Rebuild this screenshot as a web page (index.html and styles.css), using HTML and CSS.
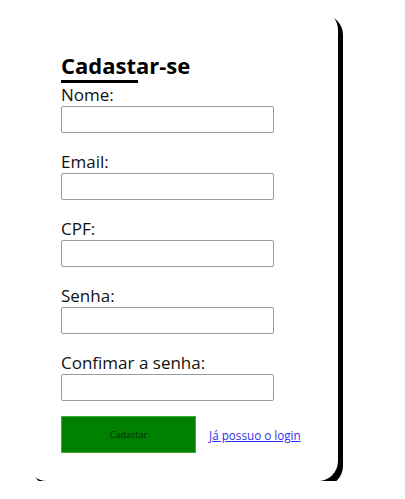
FILE: index.html
```html
<!DOCTYPE html>
<html lang="pt-BR">
<head>
<meta charset="utf-8">
<title>Cadastro</title>
<link rel="stylesheet" href="styles.css">
</head>
<body>
<div class="card">
  <h1 class="title">Cadastar-se</h1>
  <div class="title-bar"></div>
  <form class="form">
    <div class="field">
      <label class="label" for="nome">Nome:</label>
      <input class="input" id="nome" type="text">
    </div>
    <div class="field">
      <label class="label" for="email">Email:</label>
      <input class="input" id="email" type="text">
    </div>
    <div class="field">
      <label class="label" for="cpf">CPF:</label>
      <input class="input" id="cpf" type="text">
    </div>
    <div class="field">
      <label class="label" for="senha">Senha:</label>
      <input class="input" id="senha" type="password">
    </div>
    <div class="field field-last">
      <label class="label" for="conf">Confimar a senha:</label>
      <input class="input" id="conf" type="password">
    </div>
    <div class="actions">
      <button class="btn" type="button">Cadastar</button>
      <a class="link" href="#">Já possuo o login</a>
    </div>
  </form>
</div>
</body>
</html>
```
FILE: styles.css
```css
html, body {
  margin: 0;
  padding: 0;
  background: #fff;
}
body {
  font-family: "Open Sans", "Noto Sans", sans-serif;
  color: #000;
  padding: 10px 0 0 27px;
}
.card {
  box-sizing: border-box;
  width: 311px;
  height: 471px;
  background: #fff;
  border-radius: 20px;
  box-shadow: 5px 5px 0 #000;
  padding: 39px 0 0 34px;
}
.title {
  margin: 0;
  font-size: 22px;
  font-weight: 700;
  line-height: 32px;
}
.title-bar {
  width: 77px;
  height: 3px;
  background: #000;
  margin-top: -1px;
}
.form {
  display: flex;
  flex-direction: column;
}
.field {
  display: flex;
  flex-direction: column;
  align-items: flex-start;
  margin-bottom: 17px;
}
.field-last {
  margin-bottom: 15px;
}
.label {
  font-size: 17px;
  line-height: 23px;
  color: #111;
}
.input {
  box-sizing: border-box;
  width: 213px;
  height: 27px;
  border: 1px solid #9a9a9a;
  border-radius: 2px;
  margin: 0;
  padding: 2px 4px;
  background: #fff;
}
.actions {
  display: flex;
  align-items: center;
  gap: 13px;
}
.btn {
  width: 135px;
  height: 37px;
  background: #008000;
  border: 1px solid #3fae3f;
  color: #0a2a0a;
  font-family: "Open Sans", "Noto Sans", sans-serif;
  font-size: 9px;
  padding: 0;
}
.link {
  font-size: 11.7px;
  color: #3030f0;
}
```
